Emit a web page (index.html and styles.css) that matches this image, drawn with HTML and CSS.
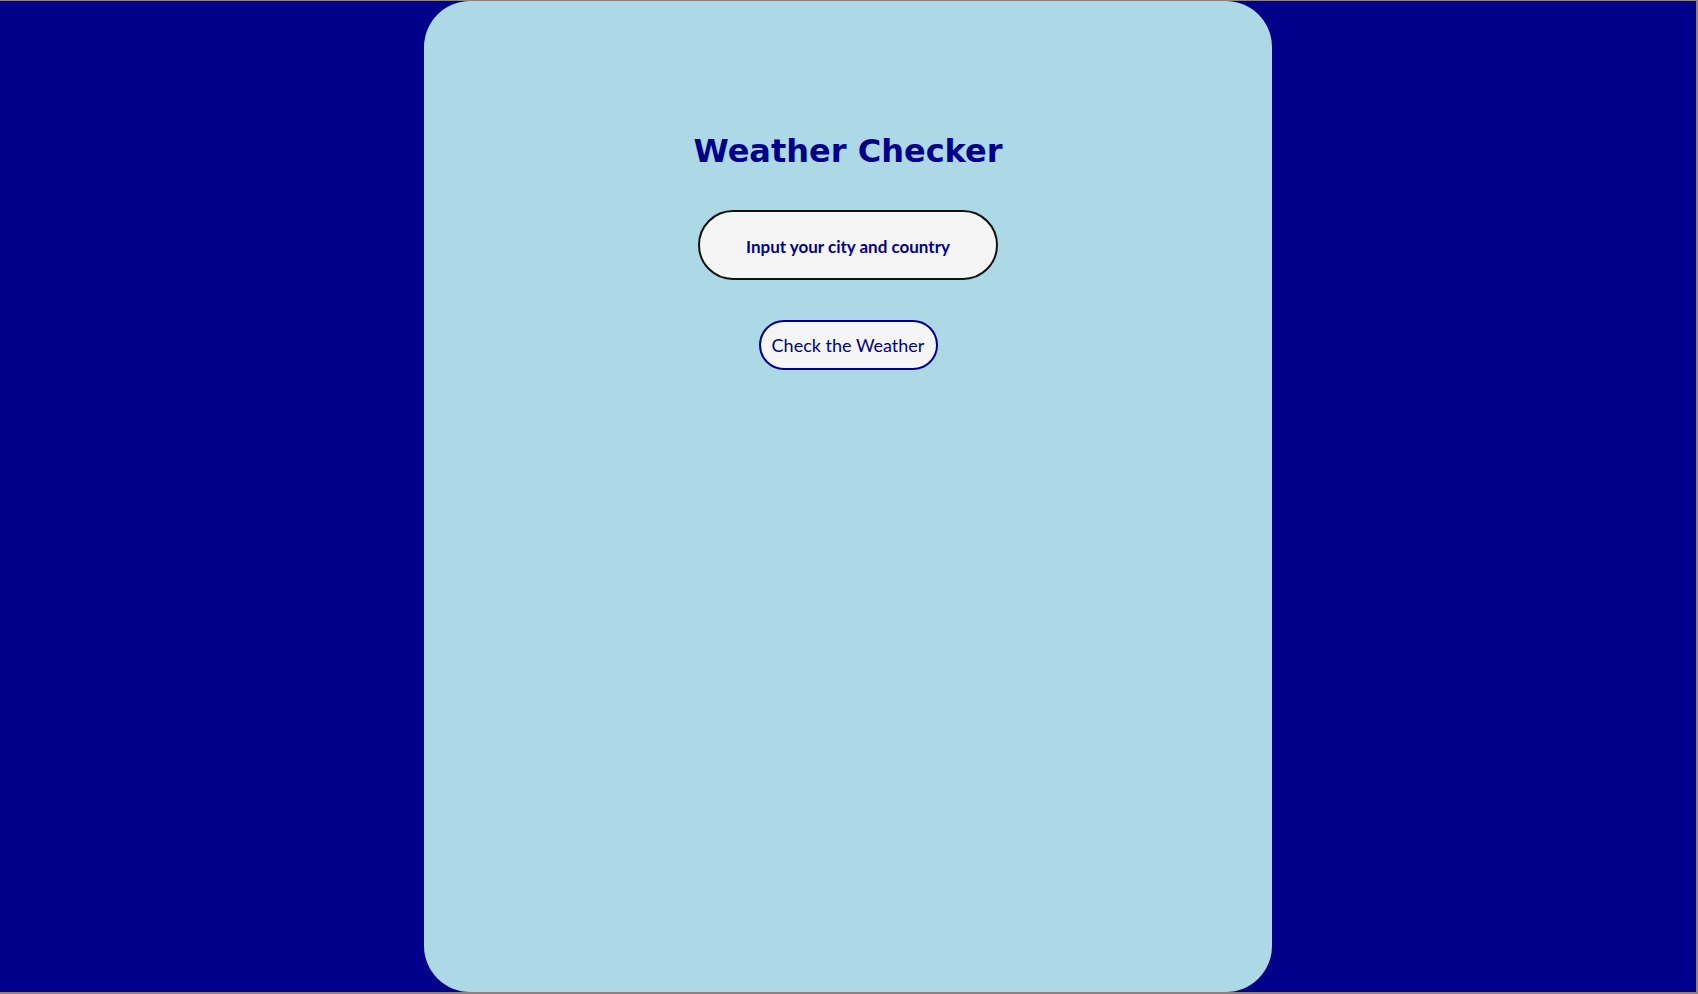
FILE: index.html
```html
<!DOCTYPE html>
<html lang="en">
<head>
<meta charset="utf-8">
<title>Weather Checker</title>
<link rel="stylesheet" href="styles.css">
</head>
<body>
<div class="frame">
  <main class="card">
    <h1 class="title">Weather Checker</h1>
    <input class="city" type="text" placeholder="Input your city and country" autofocus>
    <button class="check" type="button">Check the Weather</button>
  </main>
</div>
</body>
</html>
```
FILE: styles.css
```css
html, body {
  margin: 0;
  padding: 0;
  height: 100%;
  background: #8a8282;
}
.frame {
  box-sizing: border-box;
  height: 994px;
  border-top: 1px solid #8a8282;
  border-right: 2px solid #8a8282;
  border-bottom: 2px solid #8a8282;
  background: #00008b;
  display: flex;
  justify-content: center;
}
.card {
  box-sizing: border-box;
  width: 848px;
  height: 991px;
  background: #add8e6;
  border-radius: 46px;
  display: flex;
  flex-direction: column;
  align-items: center;
  padding-top: 131px;
}
.title {
  margin: 0;
  font-family: "DejaVu Sans", Verdana, sans-serif;
  font-weight: bold;
  font-size: 32px;
  color: #00008b;
}
.city {
  box-sizing: border-box;
  margin-top: 40px;
  width: 300px;
  height: 70px;
  border: 2px solid #111;
  border-radius: 35px;
  background: #f5f5f5;
  text-align: center;
  font-family: Lato, "Open Sans", sans-serif;
  font-weight: bold;
  font-size: 17px;
  color: #00008b;
  caret-color: #00008b;
  outline: none;
  padding: 3px 0 0;
}
.city::placeholder {
  color: #00008b;
  opacity: 1;
}
.check {
  box-sizing: border-box;
  margin-top: 40px;
  width: 179px;
  height: 50px;
  border: 2px solid #00008b;
  border-radius: 25px;
  background: #f5f5f5;
  font-family: Lato, "Open Sans", sans-serif;
  font-size: 18px;
  color: #00008b;
  padding: 0;
}
```
